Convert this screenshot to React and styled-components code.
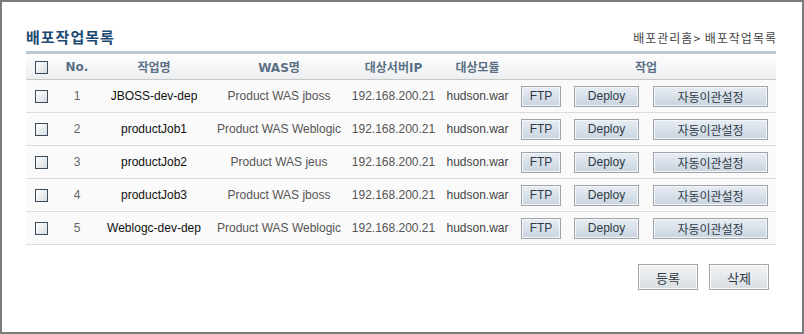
import React from 'react'
import styled, { createGlobalStyle } from 'styled-components'

const GlobalStyle = createGlobalStyle`
  html, body {
    margin: 0;
    padding: 0;
    background: #fff;
  }
  body {
    font-family: 'Liberation Sans', 'Noto Sans CJK KR', sans-serif;
    font-size: 12px;
  }
`

const Frame = styled.div`
  width: 804px;
  height: 334px;
  box-sizing: border-box;
  border: 2px solid #7b7b7b;
  padding: 26px 26px 0 24px;
  background: #fff;
`

const TitleBar = styled.div`
  display: flex;
  justify-content: space-between;
  align-items: flex-end;
  height: 18px;
  padding-bottom: 5px;
`

const Title = styled.h2`
  margin: 0;
  font-size: 15px;
  line-height: 18px;
  font-weight: bold;
  color: #1d4a72;
  letter-spacing: 1px;
  font-family: 'Noto Sans CJK KR', sans-serif;
`

const Breadcrumb = styled.div`
  font-size: 12px;
  line-height: 16px;
  color: #444;
  font-family: 'Noto Sans CJK KR', sans-serif;
  letter-spacing: 1px;
  margin-right: -1px;
`

const Table = styled.table`
  width: 750px;
  border-collapse: collapse;
  table-layout: fixed;
  border-top: 3px solid #b8c8d5;
`

const HeadRow = styled.tr`
  height: 27px;
  background: linear-gradient(#ffffff, #eceef0);
  border-bottom: 1px solid #c6c6c6;
`

const Th = styled.th`
  padding: 0;
  font-size: 12px;
  font-weight: bold;
  color: #5a6f84;
  text-align: center;
  font-family: 'DejaVu Sans', 'Noto Sans CJK KR', sans-serif;
`

const Row = styled.tr`
  height: 33px;
  background: #fafafa;
  border-bottom: 1px solid #dcdcdc;
`

const Td = styled.td`
  padding: 0;
  text-align: center;
  font-size: 12px;
  color: ${props => props.color || '#444'};
  white-space: nowrap;
`

const Check = styled.span`
  display: inline-block;
  width: 11px;
  height: 11px;
  border: 1px solid #3c4c5b;
  background: linear-gradient(135deg, #ffffff, #d7dde2);
  vertical-align: middle;
`

const Tools = styled.div`
  display: flex;
  align-items: center;
  padding-left: 5px;
`

const ToolButton = styled.button`
  width: ${props => props.w}px;
  height: 21px;
  margin-right: ${props => props.gap || 0}px;
  padding: 0;
  border: 1px solid #9ea4aa;
  box-shadow: inset 0 0 0 1px #f4f7fa;
  background: linear-gradient(#e8edf3, #c9d4e0);
  color: #2f3b47;
  font-size: 12px;
  font-family: 'Liberation Sans', 'Noto Sans CJK KR', sans-serif;
  cursor: pointer;
`

const Actions = styled.div`
  display: flex;
  justify-content: flex-end;
  gap: 11px;
  margin-top: 19px;
  padding-right: 7px;
`

const ActionButton = styled.button`
  width: 60px;
  height: 26px;
  padding: 0;
  border: 1px solid #a5a5a5;
  box-shadow: inset 0 0 0 1px #fbfbfb;
  background: linear-gradient(#f2f4f5, #d9dee1);
  color: #2c3a46;
  font-size: 13px;
  font-family: 'Noto Sans CJK KR', sans-serif;
  cursor: pointer;
`

const jobs = [
  { no: 1, name: 'JBOSS-dev-dep', was: 'Product WAS jboss' },
  { no: 2, name: 'productJob1', was: 'Product WAS Weblogic' },
  { no: 3, name: 'productJob2', was: 'Product WAS jeus' },
  { no: 4, name: 'productJob3', was: 'Product WAS jboss' },
  { no: 5, name: 'Weblogc-dev-dep', was: 'Product WAS Weblogic' },
]

export default function App() {
  return (
    <>
      <GlobalStyle />
      <Frame>
        <TitleBar>
          <Title>배포작업목록</Title>
          <Breadcrumb>배포관리홈&gt; 배포작업목록</Breadcrumb>
        </TitleBar>
        <Table>
          <colgroup>
            <col style={{ width: 30 }} />
            <col style={{ width: 42 }} />
            <col style={{ width: 112 }} />
            <col style={{ width: 138 }} />
            <col style={{ width: 91 }} />
            <col style={{ width: 77 }} />
            <col style={{ width: 260 }} />
          </colgroup>
          <thead>
            <HeadRow>
              <Th><Check /></Th>
              <Th>No.</Th>
              <Th>작업명</Th>
              <Th>WAS명</Th>
              <Th>대상서버IP</Th>
              <Th>대상모듈</Th>
              <Th>작업</Th>
            </HeadRow>
          </thead>
          <tbody>
            {jobs.map(job => (
              <Row key={job.no}>
                <Td><Check /></Td>
                <Td color="#666">{job.no}</Td>
                <Td color="#111">{job.name}</Td>
                <Td color="#555">{job.was}</Td>
                <Td color="#555">192.168.200.21</Td>
                <Td color="#444">hudson.war</Td>
                <Td>
                  <Tools>
                    <ToolButton w={40} gap={13}>FTP</ToolButton>
                    <ToolButton w={65} gap={14}>Deploy</ToolButton>
                    <ToolButton w={115}>자동이관설정</ToolButton>
                  </Tools>
                </Td>
              </Row>
            ))}
          </tbody>
        </Table>
        <Actions>
          <ActionButton>등록</ActionButton>
          <ActionButton>삭제</ActionButton>
        </Actions>
      </Frame>
    </>
  )
}
